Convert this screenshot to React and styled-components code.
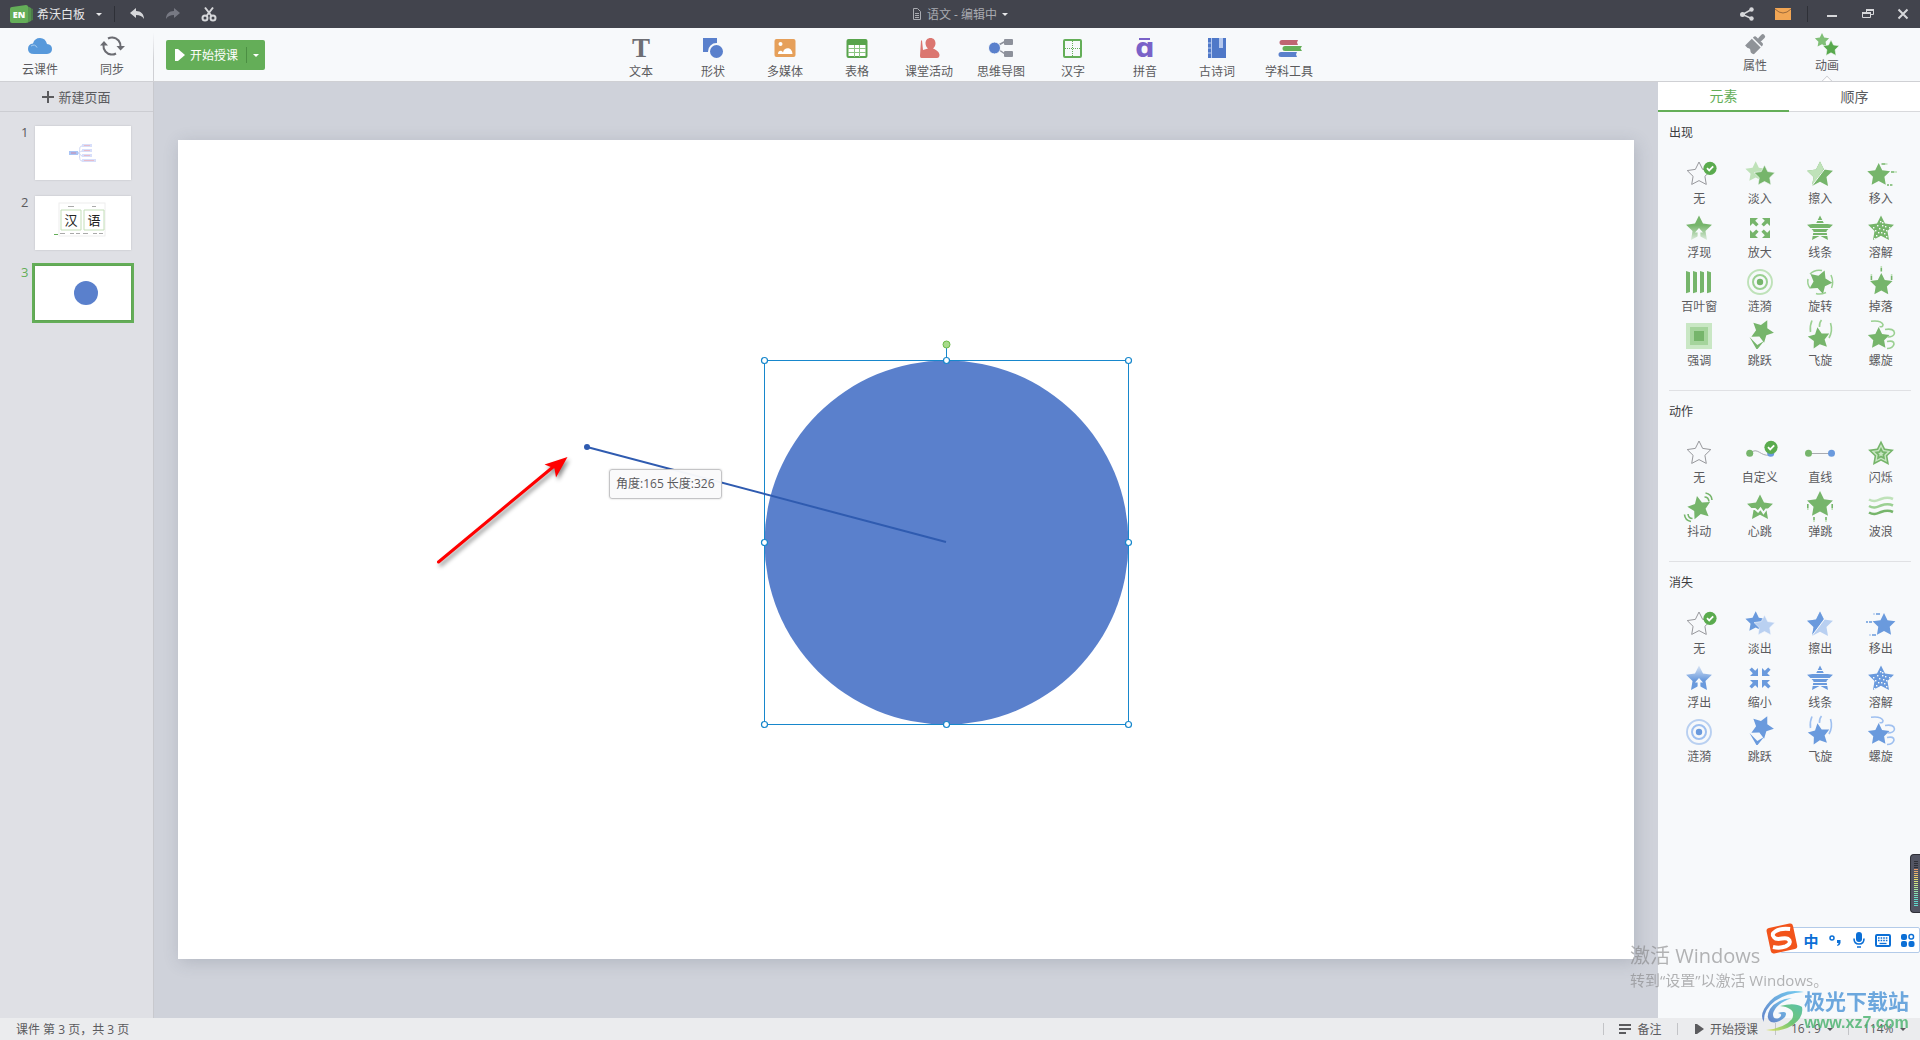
import React, { useState } from 'react';
import styled, { createGlobalStyle } from 'styled-components';

const GREEN = '#64ae58';
const FONT = `'Open Sans', 'Noto Sans CJK SC', sans-serif`;

const GlobalStyle = createGlobalStyle`
  * {
    box-sizing: border-box;
  }
  body {
    margin: 0;
    font-family: ${FONT};
    font-size: 12px;
    color: #5b5b5e;
    overflow: hidden;
  }
  button, select {
    margin: 0;
    padding: 0;
    border: 0;
    background: none;
    font: inherit;
    color: inherit;
    cursor: pointer;
  }
  svg {
    display: block;
    flex: none;
    overflow: visible;
  }
  h1, h2 {
    margin: 0;
    font: inherit;
  }
`;

let Page = styled.div`
  display: flex;
  flex-direction: column;
  height: 100vh;
`;

/* 标题栏 */
let TitleBar = styled.header`
  display: flex;
  height: 28px;
  flex: none;
  background: #42444d;
  color: #d6d7da;
`;

let TitleSide = styled.div`
  flex: 1;
  display: flex;
  align-items: center;
  justify-content: ${(props) => (props.$end ? 'flex-end' : 'flex-start')};
`;

let BarButton = styled.button`
  display: flex;
  align-items: center;
  justify-content: center;
  width: ${(props) => props.$w || 36}px;
  height: 28px;
`;

let AppMenu = styled.button`
  display: flex;
  align-items: center;
  height: 28px;
  padding-left: 10px;
  color: #e8e8ea;
`;

let AppName = styled.span`
  margin: 0 11px 0 3px;
`;

let BarLine = styled.span`
  width: 1px;
  height: 16px;
  margin: 0 ${(props) => props.$gap}px;
  background: #2e3037;
`;

let DocTitle = styled.button`
  display: flex;
  align-items: center;
  gap: 5px;
  height: 28px;
  color: #a9abb1;
`;

let Caret = styled.span`
  width: 0;
  height: 0;
  border: 3px solid transparent;
  border-top-color: ${(props) => props.$color || 'currentColor'};
  border-bottom-width: 0;
`;

/* 工具栏 */
let ToolBar = styled.div`
  display: flex;
  height: 54px;
  flex: none;
  background: #f7f9fb;
  border-bottom: 1px solid #cfd0d4;
`;

let LeftTools = styled.div`
  flex: 1;
  display: flex;
`;

let CloudTools = styled.div`
  display: flex;
  width: 154px;
  padding: 6px 0 0 4px;
  border-right: 1px solid #cfd0d4;
  border-image: linear-gradient(#f7f9fb 10%, #cfd0d4 60%) 1;
`;

let StartButton = styled.div`
  display: flex;
  align-items: center;
  height: 30px;
  margin: 12px 0 0 12px;
  border-radius: 2px;
  background: ${GREEN};
  color: #fff;
`;

let StartMain = styled.button`
  display: flex;
  align-items: center;
  gap: 5px;
  height: 16px;
  padding: 0 8px 0 9px;
  border-right: 1px solid #4c8f43;
`;

let StartMore = styled.button`
  display: flex;
  justify-content: center;
  align-items: center;
  width: 18px;
  height: 30px;
`;

let InsertTools = styled.nav`
  display: flex;
  margin-left: 10px;
  padding-top: 8px;
`;

let PanelTools = styled.div`
  flex: 1;
  display: flex;
  justify-content: flex-end;
  padding-top: 4px;

  &::after {
    content: '';
    width: 57px;
  }
`;

let ToolButton = styled.button`
  position: relative;
  display: flex;
  flex-direction: column;
  align-items: center;
  gap: ${(props) => props.$gap}px;
  width: 72px;
  height: 46px;
  line-height: 18px;
`;

let Notch = styled.span`
  position: absolute;
  bottom: -7px;
  left: 32px;
  width: 8px;
  height: 8px;
  border: solid #cfd0d4;
  border-width: 1px 0 0 1px;
  background: #fff;
  transform: rotate(45deg);
  clip-path: polygon(0 0, 100% 0, 0 100%);
`;

/* 主区域 */
let Main = styled.div`
  flex: 1;
  display: flex;
  min-height: 0;
`;

let PageList = styled.aside`
  width: 154px;
  flex: none;
  background: #dfe0e5;
  border-right: 1px solid #c8c9ce;
`;

let NewPage = styled.button`
  display: flex;
  align-items: center;
  justify-content: center;
  gap: 4px;
  width: 100%;
  height: 30px;
  border-bottom: 1px solid #cccdd2;
  font-size: 13px;
`;

let Thumbs = styled.ol`
  display: flex;
  flex-direction: column;
  gap: 10px;
  margin: 0;
  padding: 11px 0 0;
  list-style: none;
`;

let ThumbButton = styled.button`
  display: flex;
  align-items: flex-start;
  width: 100%;
  font-size: 13px;
  line-height: 18px;
  color: ${(props) => (props.$active ? GREEN : '#5b5b5e')};
`;

let PageNo = styled.span`
  width: 32px;
  padding-left: 21px;
  text-align: left;
`;

let ThumbFrame = styled.span`
  border: 3px solid ${(props) => (props.$active ? GREEN : 'transparent')};

  svg {
    background: #fff;
    box-shadow: 0 0 2px rgba(0, 0, 0, 0.15);
  }
`;

let CanvasArea = styled.main`
  flex: 1;
  display: flex;
  align-items: center;
  justify-content: center;
  padding: 0 24px 1px;
  background: #cfd2da;
`;

let Slide = styled.div`
  position: relative;
  width: 100%;
  aspect-ratio: 16 / 9;
  background: #fff;
  box-shadow: 2px 3px 16px rgba(60, 70, 90, 0.2);

  > svg {
    width: 100%;
    height: 100%;
  }
`;

let SizeTip = styled.div`
  position: absolute;
  left: 431px;
  top: 329px;
  padding: 0 6px;
  line-height: 28px;
  border: 1px solid #c4c4c6;
  border-radius: 3px;
  background: rgba(250, 250, 251, 0.97);
  box-shadow: 0 0 2px rgba(0, 0, 0, 0.2);
`;

/* 动画面板 */
let Panel = styled.aside`
  width: 262px;
  flex: none;
  background: #f7f9fb;
`;

let Tabs = styled.div`
  display: flex;
  height: 30px;
  background: #fff;
`;

let Tab = styled.button`
  flex: 1;
  font-size: 14px;
  line-height: 26px;
  color: ${(props) => (props.$active ? GREEN : '#5b5b5e')};
  border-bottom: ${(props) =>
    props.$active ? `2px solid ${GREEN}` : '1px solid #d8d9dc'};
`;

let Section = styled.section`
  margin: 0 9px 0 11px;
  padding: 13px 0 18px;

  & + & {
    border-top: 1px solid #e0e1e4;
  }
`;

let SectionTitle = styled.h2`
  margin-bottom: 15px;
  line-height: 16px;
  color: #3c3c3e;
`;

let EffectGrid = styled.div`
  display: grid;
  grid-template-columns: repeat(4, 1fr);
  grid-auto-rows: 54px;
`;

let EffectButton = styled.button`
  display: flex;
  flex-direction: column;
  align-items: center;
  line-height: 14px;
`;

/* 状态栏 */
let StatusBar = styled.footer`
  display: flex;
  align-items: center;
  height: 22px;
  flex: none;
  padding-left: 16px;
  background: #ebecee;
`;

let PageInfo = styled.span`
  flex: 1;
`;

let StatusItem = styled.div`
  display: flex;
  align-items: center;
  justify-content: center;
  gap: 6px;
  width: ${(props) => props.$w}px;
  height: 12px;
  border-left: 1px solid #c3c4c7;

  button {
    display: flex;
    align-items: center;
    gap: 6px;
  }
  select {
    appearance: none;
    line-height: 16px;
  }
`;

/* 桌面浮层 */
let Activate = styled.div`
  position: fixed;
  right: 126px;
  bottom: 50px;
  width: 164px;
  white-space: nowrap;
  color: rgba(130, 130, 132, 0.6);
  font-size: 15px;
  line-height: 20px;
  pointer-events: none;
`;

let ActivateTitle = styled.div`
  font-size: 20px;
  line-height: 28px;
`;

let Watermark = styled.div`
  position: fixed;
  right: 11px;
  bottom: 7px;
  display: flex;
  align-items: center;
  font-weight: 700;
  pointer-events: none;
  opacity: 0.85;
`;

let WatermarkText = styled.div`
  display: flex;
  flex-direction: column;
  align-items: center;
  font-size: 21px;
  line-height: 24px;
  color: #5499d8;
  white-space: nowrap;
`;

let WatermarkSite = styled.span`
  font: 700 16px/20px 'Liberation Sans', sans-serif;
  color: #4fb573;
`;

let ImeBar = styled.div`
  position: fixed;
  right: 0;
  bottom: 87px;
  display: flex;
  align-items: center;
  height: 26px;
  width: 140px;
  padding-left: 18px;
  border: 1px solid #b3cbe9;
  border-radius: 2px;
  background: #fff;
  color: #0b6fd6;
`;

let ImeLogo = styled.span`
  position: absolute;
  left: -15px;
  top: -5px;
`;

let ImeButton = styled.button`
  display: flex;
  justify-content: center;
  align-items: center;
  width: 24px;
  height: 24px;
  font-size: 15px;
  font-weight: 700;
`;

let VolumeMeter = styled.div`
  position: fixed;
  right: 0;
  bottom: 127px;
  display: flex;
  flex-direction: column;
  gap: 1px;
  width: 10px;
  height: 59px;
  padding: 6px 2px 0 3px;
  border: 1px solid #2f3038;
  border-right: 0;
  border-radius: 4px 0 0 4px;
  background: #535563;
`;

let VolumeBar = styled.i`
  height: 1px;
  flex: none;
  background: ${(props) => props.$color};
`;

// 五角星顶点
function starPoints(cx, cy, r, rot, ratio) {
  let pts = [];
  for (let i = 0; i < 10; i++) {
    let rr = i % 2 ? r * ratio : r;
    let a = ((rot - 90 + i * 36) * Math.PI) / 180;
    pts.push((cx + rr * Math.cos(a)).toFixed(2) + ',' + (cy + rr * Math.sin(a)).toFixed(2));
  }
  return pts.join(' ');
}

function Star({ x = 18, y = 19, r = 13.6, rot = 0, ratio = 0.5, ...rest }) {
  return <polygon points={starPoints(x, y, r, rot, ratio)} {...rest} />;
}

const THEMES = {
  green: { main: '#76b56b', light: '#bfe2b9', mid: '#9bd092' },
  blue: { main: '#6a9add', light: '#b9d0f1', mid: '#9fc0f0' },
};

const DOTS = [
  [17, 11], [14, 15], [19, 15], [10, 17], [22, 16], [26, 17], [16, 18], [20, 19],
  [12, 20], [23, 20], [15, 22], [18, 22], [21, 23], [13, 25], [17, 26], [23, 26], [11, 28], [19, 12],
];

function Badge() {
  return (
    <g>
      <circle cx='29' cy='12.3' r='6.6' fill='#5aab4e' />
      <path d='M26 12.2l2.2 2.2 4-4' fill='none' stroke='#fff' strokeWidth='1.8' />
    </g>
  );
}

function EffectIcon({ type, tone, checked }) {
  let c = THEMES[tone];
  let id = 'g-' + type + '-' + tone;
  let out = tone === 'blue';
  let line = { fill: 'none', stroke: c.main, strokeWidth: 1.6 };
  let shapes = {
    none: <Star r={12.4} y={18.4} fill='none' stroke='#97989c' strokeWidth='1' />,
    fade: (
      <>
        <Star x={13.7} y={16} r={10.8} fill={out ? c.main : c.light} />
        <Star x={22.5} y={20} r={11} fill={out ? c.light : c.main} stroke='#f7f9fb' strokeWidth='0.6' />
      </>
    ),
    wipe: (
      <>
        <clipPath id={id}>
          <path d='M0 0H31L7 34H0z' />
        </clipPath>
        <Star fill={out ? c.light : c.main} />
        <Star fill={out ? c.main : c.light} clipPath={`url(#${id})`} />
        <path d='M7.5 33L28 6' stroke='#f7f9fb' strokeWidth='1' />
      </>
    ),
    move: out ? (
      <>
        <Star x={21} r={12} fill={c.main} />
        <path d='M13 8h4M3 16h2M6 16h3M9 29h4' {...line} />
        <path d='M10 8h2M6 29h2' {...line} stroke={c.light} />
      </>
    ) : (
      <>
        <Star x={15.7} r={12} fill={c.main} />
        <path d='M18.5 8h4M28 16h3M24 29h2M27 29h2' {...line} />
        <path d='M22.5 8h2M31 16h3M29 29h1' {...line} stroke={c.light} />
      </>
    ),
    float: (
      <>
        <linearGradient id={id} x1='0' y1={out ? 1 : 0} x2='0' y2={out ? 0 : 1}>
          <stop offset='0.4' stopColor={c.main} />
          <stop offset='1' stopColor={c.main} stopOpacity='0.2' />
        </linearGradient>
        <Star fill={`url(#${id})`} />
        <path d='M18 18l4 4.5h-2.6v6.5h-2.8v-6.5H14z' fill='#f7f9fb' />
      </>
    ),
    zoomIn: (
      <path
        fill={c.main}
        d='M8 8h8l-2.8 2.8 3.4 3.4-2.4 2.4-3.4-3.4L8 16zM28 8v8l-2.8-2.8-3.4 3.4-2.4-2.4 3.4-3.4L20 8zM8 28v-8l2.8 2.8 3.4-3.4 2.4 2.4-3.4 3.4L16 28zM28 28h-8l2.8-2.8-3.4-3.4 2.4-2.4 3.4 3.4L28 20z'
      />
    ),
    zoomOut: (
      <path
        fill={c.main}
        d='M16 16H8l2.8-2.8-3.4-3.4 2.4-2.4 3.4 3.4L16 8zM20 16V8l2.8 2.8 3.4-3.4 2.4 2.4-3.4 3.4L28 16zM16 20v8l-2.8-2.8-3.4 3.4-2.4-2.4 3.4-3.4L8 20zM20 20h8l-2.8 2.8 3.4 3.4-2.4 2.4-3.4-3.4L20 28z'
      />
    ),
    lines: (
      <>
        <Star fill={c.main} />
        <path d='M4 10.5h28M4 13.5h28M4 18.5h28M4 22.5h28M4 25.5h28' stroke='#f7f9fb' strokeWidth='1' />
      </>
    ),
    dissolve: (
      <>
        <Star fill={c.main} />
        {DOTS.map(([x, y]) => (
          <rect key={x + '-' + y} x={x} y={y} width='1.4' height='1.4' fill='#f7f9fb' />
        ))}
      </>
    ),
    blinds: (
      <path
        fill={c.main}
        d='M5 7l4 1.3V28l-4 1.3zM12 7l4 1.3V28l-4 1.3zM19 7l4 1.3V28l-4 1.3zM26 7l4 1.3V28l-4 1.3z'
      />
    ),
    ripple: (
      <>
        <circle cx='18' cy='18' r='3.2' fill={c.main} />
        <circle cx='18' cy='18' r='7' fill='none' stroke={c.mid} strokeWidth='2' />
        <circle cx='18' cy='18' r='12' fill='none' stroke={c.light} strokeWidth='1.9' />
      </>
    ),
    rotate: (
      <>
        <Star y={18} r={12.4} rot={22} ratio={0.52} fill={c.main} />
        <g fill='none' stroke={c.mid} strokeWidth='1.5'>
          <path d='M8 10Q13 5 20 6.5M29 11Q32 18 29.5 24M24 28.5Q18 31 14 29.5M8 24Q5 20 6 15' />
        </g>
      </>
    ),
    drop: (
      <>
        <Star x={18.3} y={20.7} r={11.8} fill={c.main} />
        <path d='M8.4 12v4M18.3 4v3.5M28.6 12v4' {...line} />
        <path d='M8.4 10v2M18.3 2v2M28.6 10v2' {...line} stroke={c.light} />
      </>
    ),
    stress: (
      <>
        <path d='M5 5h26v26H5z' fill='#c9e7c4' />
        <path d='M9 9h18v18H9z' fill='#a5d49c' />
        <path d='M13 13h10v10H13z' fill={c.main} />
      </>
    ),
    jump: (
      <>
        <Star x={20} y={13} r={12} rot={26} fill={c.main} />
        <path d='M7.5 19l7.8 8 6.7-4-6.4 8h-1.2z' fill={c.main} />
      </>
    ),
    fly: (
      <>
        <Star x={17} y={20.5} r={11.4} rot={-8} fill={c.main} />
        <path d='M10 2.5Q7.5 8 8.5 14M19.5 2Q17 5 17.5 9M28.5 5Q31 13 27 20' {...line} stroke={c.mid} />
      </>
    ),
    spiral: (
      <>
        <Star x={15.7} y={20.5} r={11.4} fill={c.main} />
        <path
          d='M8 3.2Q18 2 20 6.5Q20 9.5 16.5 8.5M22 11.5Q31 10 31.5 15Q31 19 24.5 19M24 23.5Q31 22 31 26Q30 30.5 24 30.5'
          fill='none'
          stroke={c.mid}
          strokeWidth='1.6'
        />
      </>
    ),
    custom: (
      <>
        <path d='M8 18.3C16 11 18 22 28 20' fill='none' stroke='#a9abb0' />
        <circle cx='7.7' cy='18.3' r='3.5' fill={c.main} />
        <circle cx='28.7' cy='18.3' r='3.5' fill='#6a9add' />
      </>
    ),
    straight: (
      <>
        <path d='M7 18.5h22' stroke='#a9abb0' />
        <circle cx='6.5' cy='18.3' r='3.5' fill={c.main} />
        <circle cx='29.5' cy='18.3' r='3.5' fill='#6a9add' />
      </>
    ),
    flash: (
      <>
        <Star fill={c.main} />
        <Star r={10} fill='#c9e7c4' />
        <Star r={7} fill={c.main} />
        <Star r={3} fill='#c9e7c4' />
      </>
    ),
    shake: (
      <>
        <Star x={18.5} y={19} r={12.2} rot={-12} fill={c.main} />
        <path
          d='M23.5 8q4 0 4.5 4.5M24.5 4q6 1 6.5 7M11.5 29.5q-4 0-4.5-4.5M10 32.5q-6-1-6.5-7'
          {...line}
        />
      </>
    ),
    heart: (
      <>
        <Star fill={c.main} />
        <path d='M4 20h9l3 2.5 2.5-3 3 4.5 2.5-3.5H32' fill='none' stroke='#f7f9fb' strokeWidth='2' />
      </>
    ),
    bounce: (
      <>
        <Star y={15.7} fill={c.main} />
        <path d='M5.8 15v4M30.2 15v4M12 28v3M24 28v3' {...line} />
        <path d='M5.8 19v2M30.2 19v2M12 31v2M24 31v2' {...line} stroke={c.light} />
      </>
    ),
    wave: (
      <g fill='none' strokeWidth='2.6'>
        <path d='M6 10.5c5 3 8 1 12-.5s8-2 12 0' stroke={c.light} />
        <path d='M6 17c5 3 8 1 12-.5s8-2 12 0' stroke={c.mid} />
        <path d='M6 23.5c5 3 8 1 12-.5s8-2 12 0' stroke={c.main} />
      </g>
    ),
  };
  return (
    <svg width='36' height='36' viewBox='0 0 36 36' aria-hidden='true'>
      {shapes[type]}
      {checked && <Badge />}
    </svg>
  );
}

const SECTIONS = [
  {
    title: '出现',
    tone: 'green',
    checked: 'none',
    items: [
      ['none', '无'], ['fade', '淡入'], ['wipe', '擦入'], ['move', '移入'],
      ['float', '浮现'], ['zoomIn', '放大'], ['lines', '线条'], ['dissolve', '溶解'],
      ['blinds', '百叶窗'], ['ripple', '涟漪'], ['rotate', '旋转'], ['drop', '掉落'],
      ['stress', '强调'], ['jump', '跳跃'], ['fly', '飞旋'], ['spiral', '螺旋'],
    ],
  },
  {
    title: '动作',
    tone: 'green',
    checked: 'custom',
    items: [
      ['none', '无'], ['custom', '自定义'], ['straight', '直线'], ['flash', '闪烁'],
      ['shake', '抖动'], ['heart', '心跳'], ['bounce', '弹跳'], ['wave', '波浪'],
    ],
  },
  {
    title: '消失',
    tone: 'blue',
    checked: 'none',
    items: [
      ['none', '无'], ['fade', '淡出'], ['wipe', '擦出'], ['move', '移出'],
      ['float', '浮出'], ['zoomOut', '缩小'], ['lines', '线条'], ['dissolve', '溶解'],
      ['ripple', '涟漪'], ['jump', '跳跃'], ['fly', '飞旋'], ['spiral', '螺旋'],
    ],
  },
];

function Icon({ size = 24, children }) {
  return (
    <svg width={size} height={size} viewBox={`0 0 ${size} ${size}`} aria-hidden='true'>
      {children}
    </svg>
  );
}

const TOOLS = [
  {
    name: '文本',
    icon: (
      <text x='12' y='21' textAnchor='middle' fontFamily='Liberation Serif' fontWeight='700' fontSize='27' fill='#6d6e74'>
        T
      </text>
    ),
  },
  {
    name: '形状',
    icon: (
      <>
        <path d='M2 2h14v14H2z' fill='#5a80cc' />
        <circle cx='15.5' cy='15.5' r='7.5' fill='#5a80cc' stroke='#f7f9fb' strokeWidth='2' />
      </>
    ),
  },
  {
    name: '多媒体',
    icon: (
      <>
        <rect x='1.5' y='3' width='21' height='18' rx='2' fill='#e6a05a' />
        <circle cx='7.5' cy='8' r='2' fill='#fff' />
        <path d='M5 18c0-4 4-4 5-1.5 1-5.5 9-6 9.5 1.5z' fill='#fff' />
      </>
    ),
  },
  {
    name: '表格',
    icon: (
      <>
        <rect x='1.5' y='3' width='21' height='19' rx='2' fill='#58a44c' />
        <path d='M3.5 9h17v11h-17z' fill='#fff' />
        <path d='M3 12.5h18M3 16.5h18M9.5 9v12M14.5 9v12' stroke='#8cc583' />
      </>
    ),
  },
  {
    name: '课堂活动',
    icon: (
      <path
        fill='#db7670'
        d='M13.5 2c3 0 5 2.2 5 5.3 0 2.3-1 4.2-2.5 5.2 3.5 1.5 6.5 3.5 6.5 6.5 0 2-1 3-2.5 3H4.5C3.3 22 3 21 3 19.5L4 4.5h1L6 14l5-1.5C9.5 11.5 8.5 9.5 8.5 7.3 8.5 4.2 10.5 2 13.5 2z'
      />
    ),
  },
  {
    name: '思维导图',
    icon: (
      <>
        <path d='M6 11L16 5.5M6 11l10 7' stroke='#8d919b' strokeWidth='1.5' />
        <circle cx='5.5' cy='12' r='6' fill='#5a80cc' stroke='#f7f9fb' />
        <rect x='15' y='3' width='9' height='6' rx='1' fill='#8d919b' />
        <rect x='15' y='15' width='9' height='6' rx='1' fill='#8d919b' />
      </>
    ),
  },
  {
    name: '汉字',
    icon: (
      <>
        <rect x='3' y='4' width='17' height='17' rx='1' fill='none' stroke={GREEN} strokeWidth='2' />
        <path d='M11.5 5v15M4 12.5h15' stroke={GREEN} strokeDasharray='1 1' />
      </>
    ),
  },
  {
    name: '拼音',
    icon: (
      <>
        <path d='M6 3h11' stroke='#7a62c8' strokeWidth='2' />
        <text x='12' y='21' textAnchor='middle' fontFamily='DejaVu Sans' fontWeight='700' fontSize='27' fill='#7a62c8'>
          ɑ
        </text>
      </>
    ),
  },
  {
    name: '古诗词',
    icon: (
      <>
        <path d='M3 2h18v20H3z' fill='#4f78c8' />
        <path d='M6.5 2v20M3 7h3M3 12h3M3 17h3' stroke='#b5c8ee' />
        <path d='M14 2h4v10h-4z' fill='#b5c8ee' />
      </>
    ),
  },
  {
    name: '学科工具',
    icon: (
      <>
        <path d='M5 4h16l-1 2.5 1 2.5H5a2.5 2.5 0 010-5z' fill='#bf6472' />
        <path d='M8 10h17l-1.5 2.5L25 15H8a2.5 2.5 0 010-5z' fill={GREEN} />
        <path d='M4 16h16l-1 2.5 1 2.5H4a2.5 2.5 0 010-5z' fill='#5a80cc' />
      </>
    ),
  },
];

const THUMBS = [
  <g key='mind'>
    <path d='M43 27c3 0 0-7 4-7M43 27c3 0 2-2 4-2M43 27c3 0 2 3 4 3M43 27c3 0 0 8 4 8' fill='none' stroke='#cdd6f5' />
    <path d='M34 25h9v4h-9z' fill='#a9c4f5' />
    <path d='M36 27h5' stroke='#c987a8' />
    <path d='M47 18h10v3H47zM47 23h10v3H47zM47 28h10v3H47zM47 33h14v3H47z' fill='#d7defa' />
    <path d='M49 19.5h6M49 24.5h6M49 29.5h6M49 34.5h10' stroke='#e6bccb' />
  </g>,
  <g key='hanzi'>
    <rect x='24' y='7' width='46' height='33' fill='#fff' stroke='#eeeeee' />
    <path d='M26 14h20v20H26zM49 14h20v20H49z' fill='none' stroke='#c3dfb8' />
    <g fontFamily='Noto Sans CJK SC' fontSize='13' fill='#222' textAnchor='middle'>
      <text x='36' y='29'>汉</text>
      <text x='59' y='29'>语</text>
    </g>
    <path d='M33 10.5h6M57 10.5h4' stroke='#aaa' />
    <path d='M25 37.5h5M35 37.5h4M41 37.5h4M48 37.5h5M58 37.5h4M64 37.5h4' stroke='#aaa' />
    <path d='M19 38.5h4' stroke={GREEN} />
  </g>,
  <circle key='circle' cx='51' cy='27' r='12' fill='#5a80cc' />,
];

const HANDLES = [
  [586.5, 220.5], [768.5, 220.5], [950.5, 220.5], [586.5, 402.5],
  [950.5, 402.5], [586.5, 584.5], [768.5, 584.5], [950.5, 584.5],
];

function SlideCanvas() {
  return (
    <Slide>
      <svg viewBox='0 0 1456 819' role='img' aria-label='圆形'>
        <circle cx='768.5' cy='402.5' r='182' fill='#5a80cc' />
        <rect x='586.5' y='220.5' width='364' height='364' fill='none' stroke='#1787cc' />
        <path d='M768.5 208v12' stroke='#1787cc' />
        <circle cx='768.5' cy='204.5' r='3.5' fill='#a8da8c' stroke='#6cbb4a' />
        {HANDLES.map(([x, y]) => (
          <circle key={x + ',' + y} cx={x} cy={y} r='3' fill='#fff' stroke='#1787cc' strokeWidth='1.2' />
        ))}
        <path d='M409 307L768 402' stroke='#2f5bb0' strokeWidth='2' />
        <circle cx='409' cy='307' r='3' fill='#2f5bb0' />
        <g style={{ filter: 'drop-shadow(2px 3px 2px rgba(0,0,0,.45))' }}>
          <path d='M260.5 422L375 327' stroke='#f00' strokeWidth='3' strokeLinecap='round' />
          <path d='M389.5 317L378 337.5 376.5 328.5 366.5 324.5z' fill='#f00' />
        </g>
      </svg>
      <SizeTip>角度:165 长度:326</SizeTip>
    </Slide>
  );
}

function TopBar() {
  return (
    <TitleBar>
      <TitleSide>
        <AppMenu>
          <Icon size={24}>
            <path d='M18 5l5 2v11l-5 2z' fill='#4b7a49' />
            <path d='M17 4l4 2v13l-4 2z' fill='#56934f' />
            <path d='M2 5l14-2q2 0 2 2v14q0 2-2 2H2q-2 0-2-2V7q0-2 2-2z' fill={GREEN} />
            <text x='9' y='16' textAnchor='middle' fontFamily='Open Sans' fontWeight='800' fontSize='9' fill='#fff'>
              EN
            </text>
          </Icon>
          <AppName>希沃白板</AppName>
          <Caret />
        </AppMenu>
        <BarLine $gap={12} />
        <BarButton $w={20} aria-label='撤销'>
          <Icon size={16}>
            <path d='M1 7l6-5v3c5 0 8 3 8 8-2-3-4-4-8-4v3z' fill='#d6d7da' />
          </Icon>
        </BarButton>
        <BarButton $w={52} aria-label='重做'>
          <Icon size={16}>
            <path d='M15 7L9 2v3C4 5 1 8 1 13c2-3 4-4 8-4v3z' fill='#777983' />
          </Icon>
        </BarButton>
        <BarButton $w={20} aria-label='剪切'>
          <Icon size={16}>
            <g fill='none' stroke='#d6d7da' strokeWidth='2'>
              <circle cx='4' cy='12' r='2.5' />
              <circle cx='12' cy='12' r='2.5' />
              <path d='M4 1.5L10.5 10M12 1.5L5.5 10' />
            </g>
          </Icon>
        </BarButton>
      </TitleSide>
      <DocTitle>
        <svg width='10' height='12' viewBox='0 0 10 12' aria-hidden='true'>
          <path d='M1.5.5h4l3 3v8h-7zM3 5.5h4M3 7.5h4M3 9.5h4' fill='none' stroke='#a9abb1' />
        </svg>
        <span>语文 - 编辑中</span>
        <Caret $color='#e8e8ea' />
      </DocTitle>
      <TitleSide $end>
        <BarButton aria-label='分享'>
          <Icon size={14}>
            <path d='M11.5 2.5l-9 5 9 4' fill='none' stroke='#d6d7da' strokeWidth='1.5' />
            <circle cx='11.5' cy='2.5' r='2.2' fill='#d6d7da' />
            <circle cx='2.5' cy='7.5' r='2.5' fill='#d6d7da' />
            <circle cx='11.5' cy='11.5' r='2.2' fill='#d6d7da' />
          </Icon>
        </BarButton>
        <BarButton aria-label='消息'>
          <Icon size={16}>
            <path d='M0 2h16v12H0z' fill='#f2a654' />
            <path d='M0 3q8 8 16 0' fill='none' stroke='#9c6a3b' />
          </Icon>
        </BarButton>
        <BarLine $gap={6} />
        <BarButton aria-label='最小化'>
          <Icon size={12}>
            <path d='M1 8h10' stroke='#d6d7da' strokeWidth='2' />
          </Icon>
        </BarButton>
        <BarButton aria-label='还原'>
          <Icon size={12}>
            <path d='M4.5 4V1.5h7v5H8.5M.5 4.5h8v5h-8z' fill='none' stroke='#d6d7da' />
            <path d='M4 2h8M0 5h9' stroke='#d6d7da' strokeWidth='2' />
          </Icon>
        </BarButton>
        <BarButton $w={34} aria-label='关闭'>
          <Icon size={12}>
            <path d='M1.5 1.5l9 9M10.5 1.5l-9 9' stroke='#d6d7da' strokeWidth='2' />
          </Icon>
        </BarButton>
      </TitleSide>
    </TitleBar>
  );
}

function Tools() {
  return (
    <ToolBar>
      <LeftTools>
        <CloudTools>
          <ToolButton $gap={3}>
            <Icon>
              <path d='M6 20q-6 0-6-5t5-5.5Q6.5 4 12 4t7 6q5 .5 5 5t-5 5z' fill='#5799db' />
              <path d='M3 12q4-2.5 6 1.5' fill='none' stroke='#a9cdf0' strokeWidth='1' />
            </Icon>
            云课件
          </ToolButton>
          <ToolButton $gap={3}>
            <Icon>
              <path
                d='M12.5 3.5A8.5 8.5 0 0 1 20.5 13M16 19.5A8.5 8.5 0 0 1 9 20M11.5 20.5A8.5 8.5 0 0 1 3.5 11M8 4.5A8.5 8.5 0 0 1 15 4'
                fill='none'
                stroke='#6b6c72'
                strokeWidth='2'
              />
              <path d='M16.5 12H25l-4.5 4.5zM0 11.5h8L4 7z' fill='#6b6c72' />
            </Icon>
            同步
          </ToolButton>
        </CloudTools>
        <StartButton>
          <StartMain>
            <svg width='10' height='12' viewBox='0 0 10 12' aria-hidden='true'>
              <path d='M0 0h3l7 6-7 6H0z' fill='#fff' />
            </svg>
            开始授课
          </StartMain>
          <StartMore aria-label='更多授课方式'>
            <Caret />
          </StartMore>
        </StartButton>
      </LeftTools>
      <InsertTools>
        {TOOLS.map((tool) => {
          return (
            <ToolButton key={tool.name} $gap={3}>
              <Icon>{tool.icon}</Icon>
              {tool.name}
            </ToolButton>
          );
        })}
      </InsertTools>
      <PanelTools>
        <ToolButton $gap={1}>
          <Icon>
            <g transform='rotate(45 12 12)' fill='#8f9398'>
              <rect x='10' y='-1' width='4.5' height='8' rx='2' />
              <path d='M8 6h8.5q2 0 2 3H6q0-3 2-3zM6 10.500h12.500V20q-3 2-5 0t-4 0H6z' />
            </g>
          </Icon>
          属性
        </ToolButton>
        <ToolButton $gap={1}>
          <Icon>
            <Star x={7} y={8.5} r={7.5} fill='#80bf77' />
            <Star x={16} y={16.5} r={8.5} fill='#58a94d' stroke='#f7f9fb' strokeWidth='0.5' />
          </Icon>
          动画
          <Notch />
        </ToolButton>
      </PanelTools>
    </ToolBar>
  );
}

function AnimationPanel() {
  let [tab, setTab] = useState(0);

  return (
    <Panel>
      <Tabs role='tablist'>
        {['元素', '顺序'].map((name, i) => (
          <Tab key={name} role='tab' aria-selected={tab === i} $active={tab === i} onClick={() => setTab(i)}>
            {name}
          </Tab>
        ))}
      </Tabs>
      {SECTIONS.map((section) => (
        <Section key={section.title}>
          <SectionTitle>{section.title}</SectionTitle>
          <EffectGrid>
            {section.items.map(([type, label]) => (
              <EffectButton key={type}>
                <EffectIcon type={type} tone={section.tone} checked={section.checked === type} />
                {label}
              </EffectButton>
            ))}
          </EffectGrid>
        </Section>
      ))}
    </Panel>
  );
}

const VOLUME = [
  '#2f3038', '#2f3038', '#2f3038', '#2f3038', '#e89a6c', '#e8a96c', '#e8b56c', '#e8c56c', '#e8d06c',
  '#e3dc6c', '#dce27a', '#d0e583', '#c3e68c', '#b5e695', '#a5e59e', '#97e4a8', '#88e2b1', '#7be0ba',
  '#70dec2', '#66dcc8', '#5fdacc', '#5fdacc', '#5fdacc',
];

function DesktopOverlays() {
  return (
    <>
      <VolumeMeter>
        {VOLUME.map((color, i) => (
          <VolumeBar key={i} $color={color} />
        ))}
      </VolumeMeter>
      <ImeBar>
        <ImeLogo>
          <svg width='32' height='32' viewBox='0 0 32 32' aria-hidden='true'>
            <g transform='rotate(-12 16 16)'>
              <rect x='2.5' y='2.5' width='27' height='26' rx='3' fill='#f2541b' />
              <path
                d='M26 8Q17 5 11.5 7T8.5 12.5Q10 15.5 16 15.5T23 19T18 24Q12 25 5.5 22'
                fill='none'
                stroke='#fff'
                strokeWidth='4'
              />
            </g>
          </svg>
        </ImeLogo>
        <ImeButton>中</ImeButton>
        <ImeButton aria-label='标点'>
          <Icon size={16}>
            <circle cx='5' cy='6' r='2' fill='none' stroke='#0b6fd6' strokeWidth='1.5' />
            <path d='M10 8h3.5v3q-.5 2.5-3 3l-.5-1q1.5-.5 1.5-2H10z' fill='#0b6fd6' />
          </Icon>
        </ImeButton>
        <ImeButton aria-label='语音'>
          <Icon size={16}>
            <rect x='5' y='0' width='6' height='10' rx='3' fill='#0b6fd6' />
            <path d='M3 6.5q0 5.5 5 5.5t5-5.5M6 15h4' fill='none' stroke='#0b6fd6' strokeWidth='1.6' />
          </Icon>
        </ImeButton>
        <ImeButton aria-label='键盘'>
          <Icon size={16}>
            <rect x='1' y='3' width='14' height='11' rx='1' fill='none' stroke='#0b6fd6' strokeWidth='2' />
            <path d='M3 6h10M3 8.5h10' stroke='#0b6fd6' strokeWidth='1.5' strokeDasharray='1.6 1' />
            <path d='M4.5 11.5h7' stroke='#0b6fd6' strokeWidth='1.3' />
          </Icon>
        </ImeButton>
        <ImeButton aria-label='工具箱'>
          <Icon size={16}>
            <rect x='2' y='2' width='6' height='6' rx='2' fill='#0b6fd6' />
            <rect x='10' y='2.5' width='4.5' height='4.5' rx='2' fill='none' stroke='#0b6fd6' strokeWidth='1.5' />
            <rect x='2' y='9' width='6' height='6' rx='2' fill='#0b6fd6' />
            <rect x='9.5' y='9' width='6' height='6' rx='2' fill='#0b6fd6' />
          </Icon>
        </ImeButton>
      </ImeBar>
      <Activate>
        <ActivateTitle>激活 Windows</ActivateTitle>
        转到“设置”以激活 Windows。
      </Activate>
      <Watermark>
        <svg width='43' height='42' viewBox='0 0 43 42' aria-hidden='true'>
          <defs>
            <linearGradient id='wm-blue' x1='1' y1='0' x2='0' y2='1'>
              <stop offset='0' stopColor='#5ec5ee' />
              <stop offset='1' stopColor='#4a6fc0' />
            </linearGradient>
            <linearGradient id='wm-green' x1='1' y1='0' x2='0' y2='1'>
              <stop offset='0' stopColor='#3fb79a' />
              <stop offset='0.5' stopColor='#5abf5f' />
              <stop offset='1' stopColor='#dbe04a' />
            </linearGradient>
          </defs>
          <path d='M43 2Q22-2 9 11Q-3 24 3 32Q2 20 14 11Q25 3 43 2z' fill='url(#wm-blue)' />
          <path d='M31 8Q16 9 9 19Q4 28 10 32Q17 34 24 27Q28 20 17 23Q23 24 18 28Q12 30 12 24Q14 14 31 8z' fill='url(#wm-blue)' />
          <path d='M19 16Q34 12 41 17Q43 27 32 35Q19 43 5 40Q24 38 31 29Q36 18 19 16z' fill='url(#wm-green)' />
        </svg>
        <WatermarkText>
          极光下载站
          <WatermarkSite>www.xz7.com</WatermarkSite>
        </WatermarkText>
      </Watermark>
    </>
  );
}

export default function App() {
  let [page, setPage] = useState(2);

  return (
    <Page>
      <GlobalStyle />
      <TopBar />
      <Tools />
      <Main>
        <PageList>
          <NewPage>
            <Icon size={12}>
              <path d='M6 0v12M0 6h12' stroke='#5b5b5e' strokeWidth='2' />
            </Icon>
            新建页面
          </NewPage>
          <Thumbs>
            {THUMBS.map((drawing, i) => (
              <li key={i}>
                <ThumbButton $active={page === i} onClick={() => setPage(i)}>
                  <PageNo>{i + 1}</PageNo>
                  <ThumbFrame $active={page === i}>
                    <svg width='96' height='54' viewBox='0 0 96 54' aria-hidden='true'>
                      {drawing}
                    </svg>
                  </ThumbFrame>
                </ThumbButton>
              </li>
            ))}
          </Thumbs>
        </PageList>
        <CanvasArea>
          <SlideCanvas />
        </CanvasArea>
        <AnimationPanel />
      </Main>
      <StatusBar>
        <PageInfo>课件 第 3 页，共 3 页</PageInfo>
        <StatusItem $w={74}>
          <button>
            <Icon size={12}>
              <path d='M0 2h12M0 6h12M0 10h7' stroke='#5b5b5e' strokeWidth='2' />
            </Icon>
            备注
          </button>
        </StatusItem>
        <StatusItem $w={98}>
          <button>
            <svg width='9' height='10' viewBox='0 0 9 10' aria-hidden='true'>
              <path d='M0 0h2l7 5-7 5H0z' fill='#5b5b5e' />
            </svg>
            开始授课
          </button>
        </StatusItem>
        <StatusItem $w={73}>
          <select aria-label='页面比例' defaultValue='16 : 9'>
            <option>16 : 9</option>
          </select>
          <Caret />
        </StatusItem>
        <StatusItem $w={72}>
          <select aria-label='缩放' defaultValue='114%'>
            <option>114%</option>
          </select>
          <Caret />
        </StatusItem>
      </StatusBar>
      <DesktopOverlays />
    </Page>
  );
}
